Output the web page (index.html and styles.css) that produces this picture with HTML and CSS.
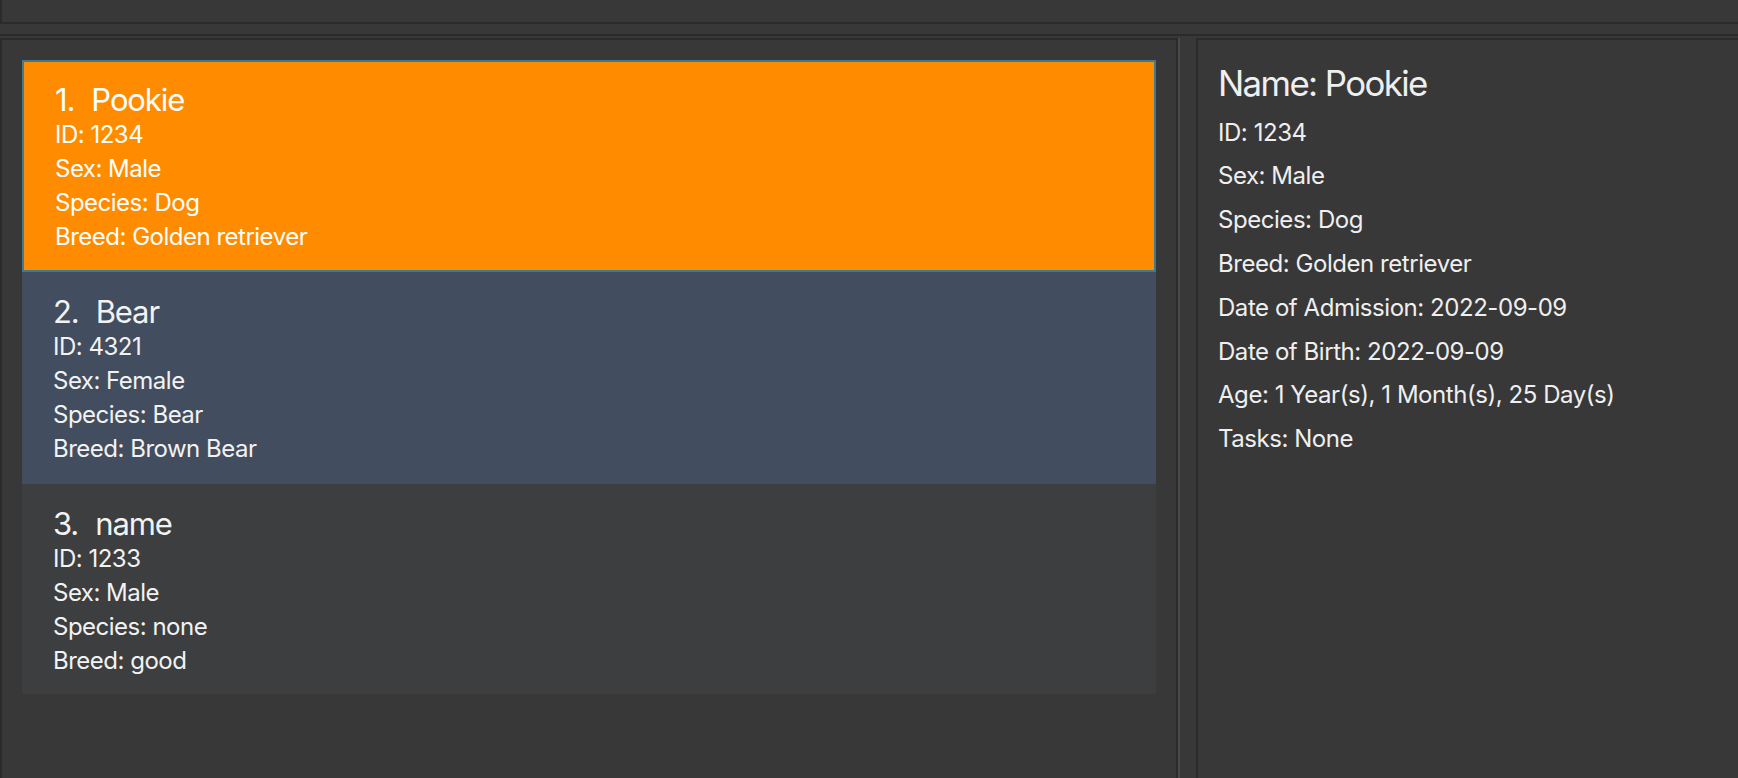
FILE: index.html
```html
<!DOCTYPE html>
<html>
<head>
<meta charset="utf-8">
<title>Pets</title>
<link rel="stylesheet" href="styles.css">
</head>
<body>
<div class="app">
  <div class="topbox"></div>
  <div class="rule"></div>
  <div class="main">
    <div class="list-panel">
      <div class="card card-selected">
        <div class="card-title"><span class="idx">1.</span><span class="name">Pookie</span></div>
        <div class="card-line">ID: 1234</div>
        <div class="card-line">Sex: Male</div>
        <div class="card-line">Species: Dog</div>
        <div class="card-line">Breed: Golden retriever</div>
      </div>
      <div class="card card-focus">
        <div class="card-title"><span class="idx">2.</span><span class="name">Bear</span></div>
        <div class="card-line">ID: 4321</div>
        <div class="card-line">Sex: Female</div>
        <div class="card-line">Species: Bear</div>
        <div class="card-line">Breed: Brown Bear</div>
      </div>
      <div class="card card-plain">
        <div class="card-title"><span class="idx">3.</span><span class="name">name</span></div>
        <div class="card-line">ID: 1233</div>
        <div class="card-line">Sex: Male</div>
        <div class="card-line">Species: none</div>
        <div class="card-line">Breed: good</div>
      </div>
    </div>
    <div class="divider"></div>
    <div class="detail-panel">
      <div class="detail-title">Name: Pookie</div>
      <div class="detail-line">ID: 1234</div>
      <div class="detail-line">Sex: Male</div>
      <div class="detail-line">Species: Dog</div>
      <div class="detail-line">Breed: Golden retriever</div>
      <div class="detail-line">Date of Admission: 2022-09-09</div>
      <div class="detail-line">Date of Birth: 2022-09-09</div>
      <div class="detail-line">Age: 1 Year(s), 1 Month(s), 25 Day(s)</div>
      <div class="detail-line">Tasks: None</div>
    </div>
  </div>
</div>
</body>
</html>
```
FILE: styles.css
```css
html, body {
  margin: 0;
  padding: 0;
  background: #383838;
  height: 778px;
  overflow: hidden;
}

body {
  font-family: Inter, Roboto, "Liberation Sans", sans-serif;
  color: #efefef;
}

.app {
  display: flex;
  flex-direction: column;
  height: 778px;
}

.topbox {
  height: 22px;
  border-left: 2px solid #2b2b2b;
  border-bottom: 2px solid #2b2b2b;
}

.rule {
  height: 2px;
  margin-top: 10px;
  margin-bottom: 2px;
  background: #2b2b2b;
}

.main {
  display: flex;
  flex: 1;
  min-height: 0;
}

.list-panel {
  width: 1134px;
  flex: none;
  border: 2px solid #2b2b2b;
  border-bottom: none;
  padding: 20px 20px 0 20px;
}

.divider {
  width: 2px;
  flex: none;
  background: #4a4a4a;
  margin-right: 16px;
}

.detail-panel {
  flex: 1;
  border-left: 2px solid #2b2b2b;
  border-top: 2px solid #2b2b2b;
  padding: 22px 20px 0 20px;
}

.card {
  padding: 20.5px 30px 18px 31px;
  color: #f2f2f2;
}

.card-selected {
  background: #ff8c00;
  border: 2px solid #3e7b91;
  padding-top: 18.5px;
  padding-bottom: 16px;
  color: #ffffff;
}

.card-focus {
  background: #424d5f;
}

.card-plain {
  background: #3c3e3f;
  padding-bottom: 16px;
}

.card-title {
  font-size: 31px;
  line-height: 37.5px;
  letter-spacing: -1.1px;
  display: flex;
}

.card-title .name {
  margin-left: 17px;
}

.card-line {
  font-size: 24px;
  line-height: 34px;
  letter-spacing: -0.5px;
}

.detail-title {
  font-size: 34.8px;
  line-height: 42px;
  letter-spacing: -1.6px;
  margin-bottom: 6.7px;
}

.detail-line {
  font-size: 24px;
  line-height: 43.8px;
  letter-spacing: -0.45px;
}
```
